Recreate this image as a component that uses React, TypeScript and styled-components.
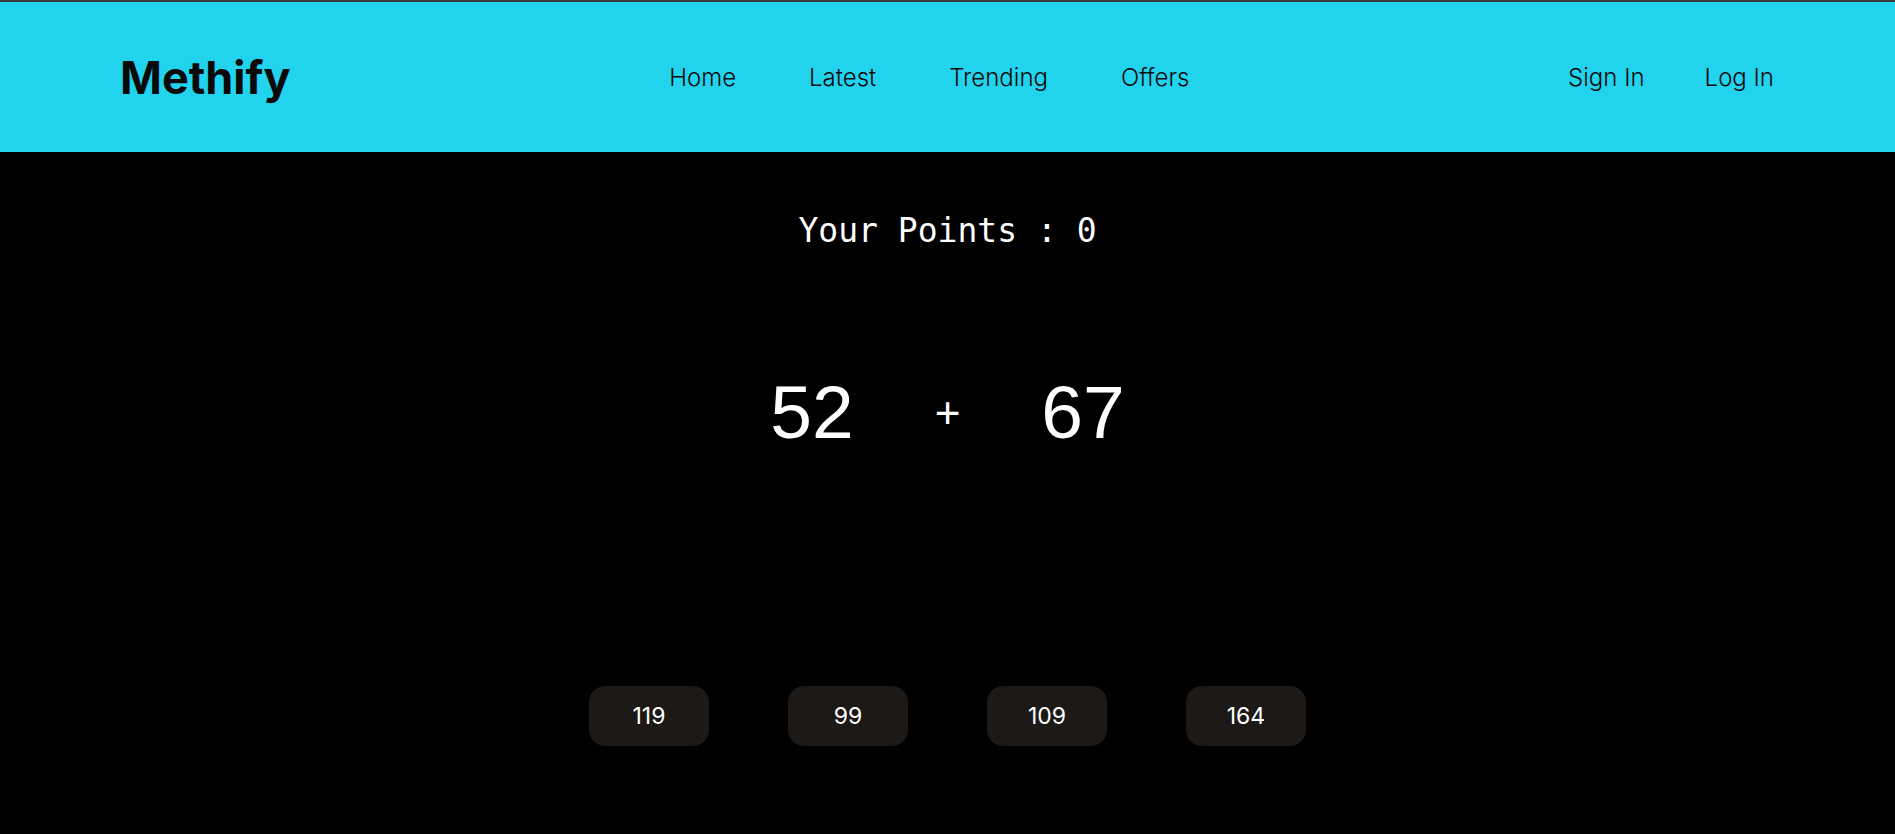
import React, { useState } from 'react'
import styled, { createGlobalStyle } from 'styled-components'

const GlobalStyle = createGlobalStyle`
  * { box-sizing: border-box; }
  html, body { margin: 0; padding: 0; background: #000; }
  body { font-family: Inter, "Noto Sans", sans-serif; }
`

const navLinks = ['Home', 'Latest', 'Trending', 'Offers']
const authLinks = ['Sign In', 'Log In']

export default function App() {
  //* the current question and the choices shown under it
  const [points] = useState(0)
  const [question] = useState({ a: 52, b: 67, op: '+' })
  const [options] = useState([119, 99, 109, 164])

  function pick(value: number) {
    console.log('picked', value, value === question.a + question.b)
  }

  return (
    <Page>
      <GlobalStyle />
      <Header>
        <Logo>Methify</Logo>
        <Nav>
          {navLinks.map(link => (
            <NavLink key={link}>{link}</NavLink>
          ))}
        </Nav>
        <Auth>
          {authLinks.map(link => (
            <NavLink key={link}>{link}</NavLink>
          ))}
        </Auth>
      </Header>

      <Main>
        <Points>Your Points : {points}</Points>

        <Question>
          <Operand>{question.a}</Operand>
          <Operator>{question.op}</Operator>
          <Operand>{question.b}</Operand>
        </Question>

        <Options>
          {options.map(option => (
            <Option key={option} onClick={() => pick(option)}>
              {option}
            </Option>
          ))}
        </Options>
      </Main>
    </Page>
  )
}

const Page = styled.div`
  min-height: 100vh;
  display: flex;
  flex-direction: column;
  border-top: 2px solid #3a3b3c;
  background: #000;
`
const Header = styled.header`
  height: 150px;
  background-color: #22d3ee;
  display: flex;
  align-items: center;
  justify-content: space-between;
  padding: 0 121px 0 120px;
`
const Logo = styled.h1`
  margin: 0;
  font-size: 45px;
  font-weight: 700;
  color: #0a0a0a;
`
const Nav = styled.nav`
  display: flex;
  gap: 73px;
`
const NavLink = styled.a`
  font-size: 24px;
  font-weight: 300;
  color: #0a0a0a;
  cursor: pointer;
`
const Auth = styled.div`
  display: flex;
  gap: 60px;
`
const Main = styled.main`
  flex: 1;
  display: flex;
  flex-direction: column;
  align-items: center;
  color: #fff;
`
const Points = styled.h2`
  margin: 59px 0 0;
  font-family: "DejaVu Sans Mono", "Liberation Mono", monospace;
  font-size: 33px;
  font-weight: 400;
  line-height: 40px;
`
const Question = styled.div`
  margin-top: 124px;
  display: flex;
  align-items: center;
  gap: 81px;
`
const Operand = styled.span`
  font-family: "Liberation Sans", Arial, sans-serif;
  font-size: 75px;
  line-height: 75px;
`
const Operator = styled.span`
  font-family: "Liberation Sans", Arial, sans-serif;
  font-size: 44px;
  line-height: 44px;
`
const Options = styled.div`
  margin-top: 236px;
  display: flex;
  gap: 79px;
`
const Option = styled.button`
  width: 120px;
  height: 60px;
  border: none;
  border-radius: 16px;
  background-color: #1c1917;
  color: #fff;
  font-family: Inter, sans-serif;
  font-size: 23px;
  cursor: pointer;
`
